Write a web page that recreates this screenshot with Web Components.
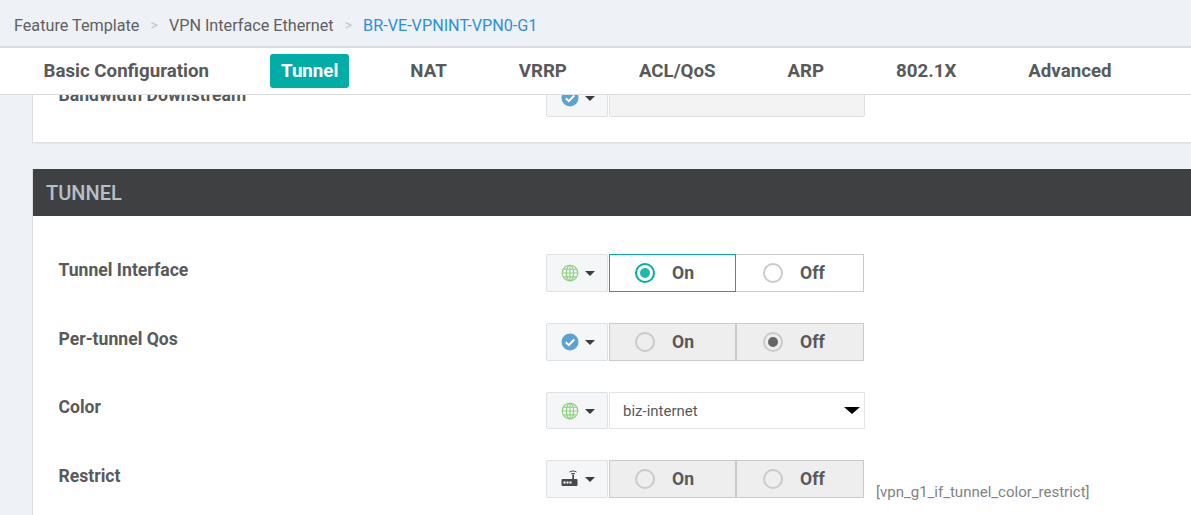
<!DOCTYPE html>
<html>
<head>
<meta charset="utf-8">
<title>Feature Template</title>
<style>
    html, body {
        margin: 0;
        height: 515px;
        overflow: hidden;
        background: #eef1f6;
        font-family: Roboto, "Liberation Sans", sans-serif;
        color: #58595b;
    }
</style>
</head>
<body>
<app-breadcrumb>
    <span>Feature Template</span>
    <span>VPN Interface Ethernet</span>
    <span>BR-VE-VPNINT-VPN0-G1</span>
</app-breadcrumb>
<app-tabs active="Tunnel" items="Basic Configuration|Tunnel|NAT|VRRP|ACL/QoS|ARP|802.1X|Advanced"></app-tabs>
<app-content>
    <form-card class="first">
        <form-row label="Bandwidth Downstream" scope="check">
            <empty-input></empty-input>
        </form-row>
    </form-card>
    <form-card title="TUNNEL">
        <form-row label="Tunnel Interface" scope="globe">
            <radio-pair selected="on" focused></radio-pair>
        </form-row>
        <form-row label="Per-tunnel Qos" scope="check">
            <radio-pair selected="off" disabled></radio-pair>
        </form-row>
        <form-row label="Color" scope="globe" style="height:37px;--label-top:6px">
            <select-box value="biz-internet"></select-box>
        </form-row>
        <form-row label="Restrict" scope="device" hint="[vpn_g1_if_tunnel_color_restrict]">
            <radio-pair disabled></radio-pair>
        </form-row>
    </form-card>
</app-content>

<script>
const ICONS = {
    globe: `<svg width="18" height="18" viewBox="0 0 18 18" fill="none" stroke="#8fcf80" stroke-width="1.15">
        <circle cx="9" cy="9" r="7.8"/>
        <ellipse cx="9" cy="9" rx="3.6" ry="7.8"/>
        <path d="M9 1.2v15.600M1.200 9h15.600M2.600 5.200h12.800M2.600 12.800h12.800"/>
    </svg>`,
    check: `<svg width="18" height="18" viewBox="0 0 18 18">
        <circle cx="9" cy="9" r="8.5" fill="#5ba3d3"/>
        <path d="M4.8 9.2l3 2.9 5.4-5.6" fill="none" stroke="#fff" stroke-width="2"/>
    </svg>`,
    device: `<svg width="18" height="18" viewBox="0 0 18 18">
        <path d="M8.500 2c2-1.300 5-1.300 7 0M10 4c1.200-.7 2.800-.7 4 0" fill="none" stroke="#4a4a4a" stroke-width="1"/>
        <rect x="11.300" y="4.500" width="1.700" height="5" fill="#4a4a4a"/>
        <path d="M1.500 9h14a1 1 0 0 1 1 1v5a1 1 0 0 1-1 1h-14a1 1 0 0 1-1-1v-5a1 1 0 0 1 1-1z" fill="#4a4a4a"/>
        <path d="M2.500 11.500h2v2h-2zM5.500 11.500h2v2h-2zM8.500 11.500h2v2h-2z" fill="#fff"/>
    </svg>`
};

class AppBreadcrumb extends HTMLElement {
    constructor() {
        super();
        this.attachShadow({ mode: 'open' });
        this.shadowRoot.innerHTML = `
            <style>
                :host {
                    display: flex;
                    align-items: center;
                    box-sizing: border-box;
                    height: 48px;
                    padding: 4px 0 0 14px;
                    background: #eef1f6;
                    border-bottom: 2px solid #dcdddf;
                    font-size: 16.2px;
                    color: #5f6062;
                }
                .sep {
                    color: #c4c6c9;
                    font-size: 14px;
                    width: 29.5px;
                    text-align: center;
                }
                .last { color: #2a8fe0; }
            </style>
            <div id="out" style="display:flex;align-items:center"></div>
        `;
    }

    connectedCallback() {
        const out = this.shadowRoot.getElementById('out');
        const items = [...this.children].map(c => c.textContent);
        items.forEach((text, i) => {
            const s = document.createElement('span');
            s.textContent = text;
            if (i == items.length - 1) s.className = 'last';
            out.appendChild(s);
            if (i < items.length - 1) {
                const sep = document.createElement('span');
                sep.className = 'sep';
                sep.textContent = '>';
                out.appendChild(sep);
            }
        });
    }
}

class AppTabs extends HTMLElement {
    constructor() {
        super();
        this.attachShadow({ mode: 'open' });
        this.shadowRoot.innerHTML = `
            <style>
                :host {
                    display: flex;
                    position: relative;
                    z-index: 2;
                    box-sizing: border-box;
                    height: 47px;
                    padding: 6px 0 0 33px;
                    background: #fff;
                    border-bottom: 1px solid #dcdddf;
                    font-size: 18.7px;
                    font-weight: 700;
                }
                nav { display: flex; gap: 51px; align-items: flex-start; }
                a {
                    display: block;
                    height: 34px;
                    line-height: 34px;
                    padding: 0 10.5px;
                    border-radius: 3px;
                    color: #58595b;
                }
                a.active { background: #00ada7; color: #fff; }
            </style>
            <nav></nav>
        `;
    }

    connectedCallback() {
        const nav = this.shadowRoot.querySelector('nav');
        this.getAttribute('items').split('|').forEach(name => {
            const a = document.createElement('a');
            a.textContent = name;
            if (name == this.getAttribute('active')) a.className = 'active';
            nav.appendChild(a);
        });
    }
}

class AppContent extends HTMLElement {
    constructor() {
        super();
        this.attachShadow({ mode: 'open' });
        this.shadowRoot.innerHTML = `
            <style>
                :host {
                    display: block;
                    height: 420px;
                    overflow: hidden;
                }
                .scroller {
                    display: flex;
                    flex-direction: column;
                    gap: 26px;
                    margin-top: -16px;
                    padding-left: 32px;
                }
            </style>
            <div class="scroller"><slot></slot></div>
        `;
    }
}

class FormCard extends HTMLElement {
    constructor() {
        super();
        this.attachShadow({ mode: 'open' });
        this.shadowRoot.innerHTML = `
            <style>
                :host {
                    display: block;
                    background: #fff;
                    border-left: 1px solid #dcdddf;
                    border-bottom: 1px solid #dcdddf;
                    box-shadow: 0 1px 1px rgba(0,0,0,0.04);
                }
                header {
                    box-sizing: border-box;
                    height: 47px;
                    line-height: 48px;
                    padding-left: 13px;
                    background: #3f4041;
                    color: #b4c0c6;
                    font-size: 20px;
                    font-weight: 500;
                }
                .body {
                    display: flex;
                    flex-direction: column;
                    gap: 31px;
                    padding: 38px 0 25px 26px;
                }
                :host(.first) .body { padding-top: 0; }
            </style>
            <header></header>
            <div class="body"><slot></slot></div>
        `;
    }

    connectedCallback() {
        const header = this.shadowRoot.querySelector('header');
        if (this.getAttribute('title')) header.textContent = this.getAttribute('title');
        else header.remove();
    }
}

class FormRow extends HTMLElement {
    constructor() {
        super();
        this.attachShadow({ mode: 'open' });
        this.shadowRoot.innerHTML = `
            <style>
                :host {
                    display: grid;
                    grid-template-columns: 487px 63px auto 1fr;
                    height: 38px;
                }
                label {
                    font-size: 17.6px;
                    font-weight: 700;
                    line-height: 19px;
                    padding-top: var(--label-top, 7px);
                    margin-left: -0.5px;
                    color: #58595b;
                }
                .scope {
                    display: flex;
                    align-items: center;
                    gap: 6px;
                    box-sizing: border-box;
                    width: 62px;
                    height: 100%;
                    padding-left: 14px;
                    background: #f5f6f8;
                    border: 1px solid #dfe0e2;
                    border-radius: 2px;
                }
                svg { display: block; }
                .caret {
                    width: 0;
                    height: 0;
                    border-left: 5px solid transparent;
                    border-right: 5px solid transparent;
                    border-top: 5px solid #3c3c3c;
                    margin-top: 1px;
                }
                .hint {
                    align-self: end;
                    margin-left: 12px;
                    margin-bottom: -3px;
                    font-size: 15px;
                    color: #808285;
                    white-space: nowrap;
                }
            </style>
            <label></label>
            <div class="scope"><span class="icon"></span><span class="caret"></span></div>
            <slot></slot>
            <span class="hint"></span>
        `;
    }

    connectedCallback() {
        const root = this.shadowRoot;
        root.querySelector('label').textContent = this.getAttribute('label');
        root.querySelector('.icon').innerHTML = ICONS[this.getAttribute('scope')];
        root.querySelector('.hint').textContent = this.getAttribute('hint') || '';
    }
}

class RadioPair extends HTMLElement {
    constructor() {
        super();
        this.attachShadow({ mode: 'open' });
        this.shadowRoot.innerHTML = `
            <style>
                :host {
                    display: grid;
                    grid-template-columns: 127px 128px;
                    width: 255px;
                    font-size: 17.6px;
                    font-weight: 700;
                }
                .opt {
                    display: flex;
                    align-items: center;
                    gap: 17px;
                    box-sizing: border-box;
                    padding-left: 25px;
                    border: 1px solid #c9cacc;
                    background: #fff;
                    color: #58595b;
                }
                .opt + .opt { border-left: 0; padding-left: 27px; }
                :host([disabled]) .opt { background: #eeeeee; }
                :host([disabled]) .opt + .opt { border-left: 1px solid #c9cacc; padding-left: 26px; }
                .opt.focus { border: 1px solid #00ada7; }
                .dot {
                    box-sizing: border-box;
                    width: 20px;
                    height: 20px;
                    border-radius: 50%;
                    border: 2px solid #c9cacc;
                    background: transparent;
                    display: flex;
                    align-items: center;
                    justify-content: center;
                }
                .sel::after {
                    content: "";
                    width: 10px;
                    height: 10px;
                    border-radius: 50%;
                    background: #666;
                }
                .focus .sel { border-color: #00ada7; }
                .focus .sel::after { background: #1fb8b0; }
            </style>
            <div class="opt" id="on"><span class="dot"></span>On</div>
            <div class="opt" id="off"><span class="dot"></span>Off</div>
        `;
    }

    connectedCallback() {
        const selected = this.getAttribute('selected');
        if (selected) {
            const opt = this.shadowRoot.getElementById(selected);
            opt.querySelector('.dot').classList.add('sel');
            if (this.hasAttribute('focused')) opt.classList.add('focus');
        }
    }
}

class SelectBox extends HTMLElement {
    constructor() {
        super();
        this.attachShadow({ mode: 'open' });
        this.shadowRoot.innerHTML = `
            <style>
                :host {
                    display: flex;
                    align-items: center;
                    justify-content: space-between;
                    box-sizing: border-box;
                    width: 256px;
                    height: 37px;
                    padding: 0 4px 0 13px;
                    background: #fff;
                    border: 1px solid #e3e4e6;
                    font-size: 15px;
                    color: #58595b;
                }
                i {
                    width: 0;
                    height: 0;
                    border-left: 8px solid transparent;
                    border-right: 8px solid transparent;
                    border-top: 7px solid #000;
                }
            </style>
            <span></span><i></i>
        `;
    }

    connectedCallback() {
        this.shadowRoot.querySelector('span').textContent = this.getAttribute('value');
    }
}

class EmptyInput extends HTMLElement {
    constructor() {
        super();
        this.attachShadow({ mode: 'open' });
        this.shadowRoot.innerHTML = `
            <style>
                :host {
                    display: block;
                    box-sizing: border-box;
                    width: 256px;
                    height: 38px;
                    background: #f3f3f4;
                    border: 1px solid #dfe0e2;
                    border-radius: 2px;
                }
            </style>
        `;
    }
}

customElements.define('app-breadcrumb', AppBreadcrumb);
customElements.define('app-tabs', AppTabs);
customElements.define('app-content', AppContent);
customElements.define('form-card', FormCard);
customElements.define('form-row', FormRow);
customElements.define('radio-pair', RadioPair);
customElements.define('select-box', SelectBox);
customElements.define('empty-input', EmptyInput);
</script>
</body>
</html>
